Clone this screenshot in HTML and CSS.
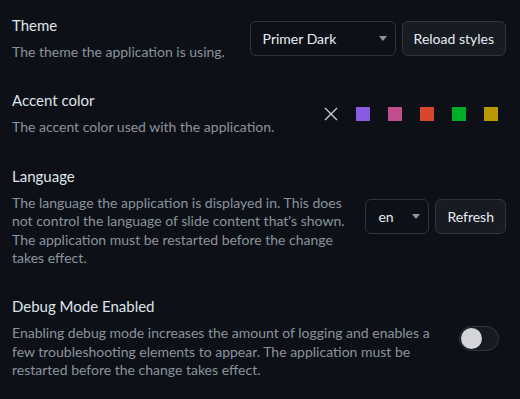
FILE: index.html
```html
<!DOCTYPE html>
<html lang="en">
<head>
<meta charset="utf-8">
<link rel="stylesheet" href="styles.css">
</head>
<body>
<main class="settings">
  <section class="setting">
    <div class="info">
      <div class="title">Theme</div>
      <div class="desc">The theme the application is using.</div>
    </div>
    <div class="controls">
      <div class="select select-theme"><span>Primer Dark</span><span class="caret"></span></div>
      <button class="btn">Reload styles</button>
    </div>
  </section>
  <section class="setting">
    <div class="info">
      <div class="title">Accent color</div>
      <div class="desc">The accent color used with the application.</div>
    </div>
    <div class="swatches">
      <svg class="clear" width="14" height="14" viewBox="0 0 14 14"><path d="M1 1L13 13M13 1L1 13" stroke="#c9d1d9" stroke-width="1.3" fill="none"/></svg>
      <span class="swatch purple"></span>
      <span class="swatch pink"></span>
      <span class="swatch orange"></span>
      <span class="swatch green"></span>
      <span class="swatch yellow"></span>
    </div>
  </section>
  <section class="setting">
    <div class="info">
      <div class="title">Language</div>
      <div class="desc">The language the application is displayed in. This does not control the language of slide content that's shown. The application must be restarted before the change takes effect.</div>
    </div>
    <div class="controls">
      <div class="select select-lang"><span>en</span><span class="caret"></span></div>
      <button class="btn">Refresh</button>
    </div>
  </section>
  <section class="setting">
    <div class="info">
      <div class="title">Debug Mode Enabled</div>
      <div class="desc">Enabling debug mode increases the amount of logging and enables a few troubleshooting elements to appear. The application must be restarted before the change takes effect.</div>
    </div>
    <div class="toggle"><span class="knob"></span></div>
  </section>
</main>
</body>
</html>
```
FILE: styles.css
```css
html, body {
  margin: 0;
  padding: 0;
  background: #0d1117;
}
body {
  font-family: "Lato", "Noto Sans", sans-serif;
  color: #e6edf3;
  width: 520px;
  height: 399px;
  overflow: hidden;
}
.settings {
  display: flex;
  flex-direction: column;
  gap: 29px;
  padding: 15px 14px 0 12px;
}
.setting {
  display: flex;
  align-items: center;
  justify-content: space-between;
  gap: 14px;
}
.info {
  flex: 1;
  min-width: 0;
}
.title {
  font-size: 15px;
  line-height: 20px;
  color: #dfe3e9;
  margin-bottom: 8px;
}
.desc {
  font-size: 14px;
  line-height: 18.4px;
  color: #8a939d;
}
.controls {
  display: flex;
  gap: 6px;
}
.select {
  box-sizing: border-box;
  height: 35px;
  border: 1px solid #30363d;
  border-radius: 6px;
  background: #0d1117;
  color: #e6edf3;
  font-size: 14px;
  display: flex;
  align-items: center;
  justify-content: space-between;
  padding: 0 8px 0 12px;
}
.select-theme { width: 146px; }
.select-lang { width: 64px; }
.caret {
  width: 0;
  height: 0;
  border-left: 4.5px solid transparent;
  border-right: 4.5px solid transparent;
  border-top: 5px solid #8d96a0;
}
.btn {
  box-sizing: border-box;
  height: 35px;
  border: 1px solid #30363d;
  border-radius: 6px;
  background: #171b22;
  color: #e6edf3;
  font-family: inherit;
  font-size: 14px;
  padding: 0 11px;
}
.swatches {
  display: flex;
  align-items: center;
  gap: 18px;
  padding-right: 8px;
}
.clear { display: block; }
.swatch {
  width: 14px;
  height: 14px;
  display: block;
}
.purple { background: #8c5be5; }
.pink { background: #c24e90; }
.orange { background: #d5482e; }
.green { background: #00ad26; }
.yellow { background: #b89a00; }
.toggle {
  box-sizing: border-box;
  width: 40px;
  height: 25px;
  border: 1px solid #30363d;
  border-radius: 13px;
  background: #161b22;
  margin-right: 7px;
  display: flex;
  align-items: center;
  padding-left: 1px;
}
.knob {
  width: 21px;
  height: 21px;
  border-radius: 50%;
  background: #d4d5d9;
}
```
